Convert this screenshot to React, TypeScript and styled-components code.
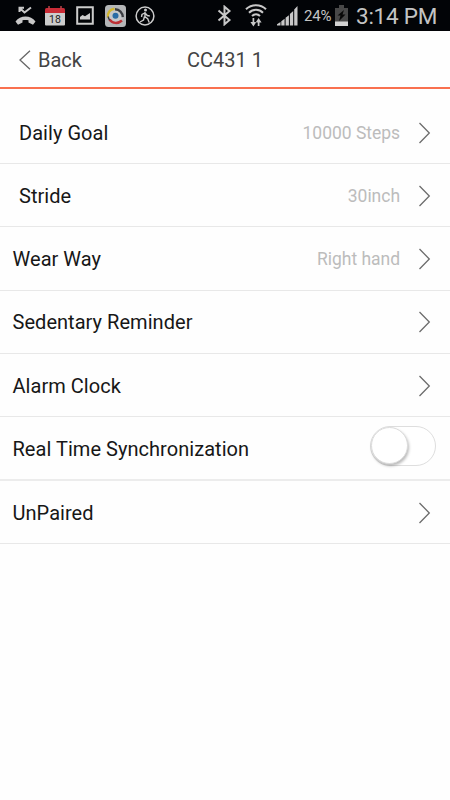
import React from "react";
import styled, { createGlobalStyle } from "styled-components";

const GlobalStyle = createGlobalStyle`
  * { box-sizing: border-box; }
  body { margin: 0; background: #fff; font-family: Roboto, sans-serif; }
`;

const Screen = styled.div`
  width: 450px;
  height: 800px;
  display: flex;
  flex-direction: column;
  background: #fefefe;
  overflow: hidden;
`;

const StatusBar = styled.div`
  height: 31px;
  flex: none;
  display: flex;
  justify-content: space-between;
  background: #020407;
  color: #c4c4c4;
`;

const StatusGroup = styled.div`
  display: flex;
  align-items: center;
  white-space: nowrap;
`;

const StatusIcon = styled.svg<{ $gap?: number }>`
  display: block;
  flex: none;
  margin-left: ${(p) => p.$gap ?? 0}px;
`;

const Percent = styled.span`
  width: 28px;
  margin-left: 6px;
  font-size: 15px;
  line-height: 31px;
  padding-top: 1px;
  letter-spacing: -0.2px;
`;

const Clock = styled.span`
  width: 82px;
  margin: 1px 12px 0 8px;
  font-size: 22.5px;
  letter-spacing: -0.25px;
  line-height: 31px;
`;

const Header = styled.header`
  height: 58px;
  flex: none;
  display: grid;
  grid-template-columns: 150px 150px 150px;
  align-items: center;
  border-bottom: 2px solid #f9704f;
  color: #444;
  font-size: 20px;
`;

const BackButton = styled.button`
  display: flex;
  align-items: center;
  gap: 7px;
  padding: 1px 0 0 19px;
  border: 0;
  background: none;
  color: inherit;
  font: inherit;
  letter-spacing: -0.05px;
`;

const Title = styled.h1`
  margin: 1px 0 0;
  font: inherit;
  text-align: center;
`;

const List = styled.main`
  padding-top: 12px;
`;

const Row = styled.div<{ $height: number; $indent: number; $top: number; $heavy?: boolean }>`
  height: ${(p) => p.$height}px;
  display: flex;
  align-items: center;
  padding: ${(p) => p.$top}px 19px 0 ${(p) => p.$indent}px;
  border-bottom: ${(p) => (p.$heavy ? "2px solid #ececec" : "1px solid #e8e8e8")};
`;

const Label = styled.span`
  flex: 1;
  color: #171717;
  font-size: 20px;
  letter-spacing: 0.04px;
`;

const Value = styled.span`
  margin-right: 18px;
  color: #bcbcbc;
  font-size: 17.5px;
  letter-spacing: -0.03px;
`;

const ChevronIcon = styled.svg`
  display: block;
  flex: none;
`;

const Toggle = styled.button`
  width: 66px;
  height: 40px;
  margin: -7px -5px 0 0;
  padding: 0;
  border: 1px solid #dedede;
  border-radius: 20px;
  background: #fff;
`;

const Knob = styled.span`
  display: block;
  width: 37px;
  height: 37px;
  border-radius: 50%;
  border: 1px solid #dcdcdc;
  background: #fff;
  box-shadow: 1px 2px 3px rgba(0, 0, 0, 0.28);
`;

const Chevron = () => (
  <ChevronIcon width="13" height="22" viewBox="0 0 13 22" fill="none" stroke="#6c6c6c" strokeWidth="1.3">
    <path d="M1.5 1 11.3 11 1.5 21" />
  </ChevronIcon>
);

type Item = {
  label: string;
  value?: string;
  height: number;
  indent: number;
  top: number;
  toggle?: boolean;
};

const items: Item[] = [
  { label: "Daily Goal", value: "10000 Steps", height: 63, indent: 19, top: 2 },
  { label: "Stride", value: "30inch", height: 63, indent: 19, top: 2 },
  { label: "Wear Way", value: "Right hand", height: 64, indent: 12.5, top: 0 },
  { label: "Sedentary Reminder", height: 63, indent: 12.5, top: 0 },
  { label: "Alarm Clock", height: 63, indent: 12.5, top: 1 },
  { label: "Real Time Synchronization", height: 64, indent: 12.5, top: 2, toggle: true },
  { label: "UnPaired", height: 63, indent: 12.5, top: 1 },
];

const MissedCall = () => (
  <StatusIcon $gap={15} width="21" height="20" viewBox="0 0 21 20">
    <path d="M.5 15.500C3 12 6.500 10.500 10.500 10.500s7.500 1.500 10 5L18 18.800l-4.500-2.300v-2.200c-2-.5-4-.5-6 0v2.200L3 18.800z" fill="#c8c8c8" />
    <path d="M4.500 6V1.800h4.500M5 2.300l4.500 4.200L16 1.500" fill="none" stroke="#c8c8c8" strokeWidth="2" />
  </StatusIcon>
);

const CalendarDay = () => (
  <StatusIcon $gap={9} width="20" height="20" viewBox="0 0 20 20">
    <path d="M0 3.500Q0 2 1.500 2h17Q20 2 20 3.500V8H0z" fill="#c92b36" />
    <path d="M0 7h20v11.500q0 1-1 1H1q-1 0-1-1z" fill="#ccc" />
    <path d="M4 0v3.500M16 0v3.500" stroke="#b8434a" strokeWidth="1.500" />
    <text x="10" y="17" textAnchor="middle" fontSize="10.500" fontFamily="Roboto, sans-serif" fill="#222">18</text>
  </StatusIcon>
);

const Picture = () => (
  <StatusIcon $gap={11} width="18" height="19" viewBox="0 0 18 19">
    <path d="M1.200 1.200h15.600v16.600H1.200z" fill="none" stroke="#ccc" strokeWidth="2" />
    <path d="M4 13.500V11l2.500-2 2.500 1.300L14 7v6.500z" fill="#ccc" />
  </StatusIcon>
);

const SwirlApp = () => (
  <StatusIcon $gap={11} width="21" height="22" viewBox="0 0 21 22">
    <rect width="21" height="22" rx="3.500" fill="#b4b6b8" />
    <circle cx="10.500" cy="11" r="7.500" fill="#c6c8ca" />
    <g fill="none" strokeWidth="2.400">
      <path d="M3 12.500C2.300 7.500 5 4.300 9.500 3.800" stroke="#d3b72f" />
      <path d="M10 4.200c4.500.3 7.500 3.500 7.800 8" stroke="#3a3d42" />
      <path d="M4.500 14.500c3 4.300 8.500 4.500 12.500 1" stroke="#bd3035" />
      <path d="M3.200 11.500c.2 1.500.6 2.500 1.500 3.500" stroke="#3a3d42" strokeWidth="1.500" />
    </g>
    <circle cx="10.500" cy="10.800" r="3" fill="#2a6ca5" />
  </StatusIcon>
);

const Walker = () => (
  <StatusIcon $gap={9} width="20" height="20" viewBox="0 0 20 20">
    <circle cx="10" cy="10" r="8.900" fill="none" stroke="#ccc" strokeWidth="1.500" />
    <circle cx="10.500" cy="4" r="1.500" fill="#ccc" />
    <path d="M10 6v4.800l2.700 2 1.500 3.700M9.500 10.500 8.500 14 5 16M9.700 7 7 8.500 6.500 11M10.500 7.500l1.800 2 2.500.5" fill="none" stroke="#ccc" strokeWidth="1.400" />
  </StatusIcon>
);

const Bluetooth = () => (
  <StatusIcon width="15" height="21" viewBox="0 0 15 21">
    <path d="m1.500 5.500 11 9.500-5 4.300V1.700l5 4.300-11 9.500" fill="none" stroke="#c8c8c8" strokeWidth="2" />
  </StatusIcon>
);

const Wifi = () => (
  <StatusIcon $gap={13} width="22" height="23" viewBox="0 0 22 23">
    <g fill="none" stroke="#c8c8c8" strokeWidth="2">
      <path d="M1 5.200C6.500-.2 15.500-.2 21 5.200" />
      <path d="M4 8.700c4-3.900 10-3.900 14 0" />
      <path d="M7 12c2.300-2.200 5.700-2.200 8 0" />
      <path d="M8.400 14v6M13.600 22v-6" strokeWidth="1.700" />
    </g>
    <path d="M5.400 18h6l-3 4.500zM10.600 18.500h6l-3-4.500z" fill="#c8c8c8" />
  </StatusIcon>
);

const Signal = () => (
  <StatusIcon $gap={10} width="21" height="21" viewBox="0 0 21 21">
    <path d="M0 20.500v-1.300L3.500 17v3.500zM4.300 20.500v-4.300l3.300-2.500v6.800zM8.600 20.500v-7.700l3.300-2.600v10.300zM12.900 20.500V9l3.300-3v14.500zM17.200 20.500V4.500L20.500 1v19.500z" fill="#c8c8c8" />
  </StatusIcon>
);

const Battery = () => (
  <StatusIcon $gap={3} width="13" height="21" viewBox="0 0 13 21">
    <path d="M4 0h5v3h4v18H0V3h4z" fill="#484848" />
    <path d="M0 16.500h13V21H0z" fill="#d2d2d2" />
    <path d="M9 5 2.500 10.500h3L4 16l6.500-6.500h-3z" fill="#080808" />
  </StatusIcon>
);

export default function App() {
  return (
    <Screen>
      <GlobalStyle />
      <StatusBar>
        <StatusGroup>
          <MissedCall />
          <CalendarDay />
          <Picture />
          <SwirlApp />
          <Walker />
        </StatusGroup>
        <StatusGroup>
          <Bluetooth />
          <Wifi />
          <Signal />
          <Percent>24%</Percent>
          <Battery />
          <Clock>3:14 PM</Clock>
        </StatusGroup>
      </StatusBar>
      <Header>
        <BackButton>
          <ChevronIcon width="12" height="20" viewBox="0 0 12 20" fill="none" stroke="#666" strokeWidth="1.3">
            <path d="M11 .8 1 10l10 9.200" />
          </ChevronIcon>
          Back
        </BackButton>
        <Title>CC431 1</Title>
      </Header>
      <List>
        {items.map((item) => (
          <Row
            key={item.label}
            $height={item.height}
            $indent={item.indent}
            $top={item.top}
            $heavy={item.toggle}
          >
            <Label>{item.label}</Label>
            {item.value && <Value>{item.value}</Value>}
            {item.toggle ? (
              <Toggle role="switch" aria-checked={false} aria-label={item.label}>
                <Knob />
              </Toggle>
            ) : (
              <Chevron />
            )}
          </Row>
        ))}
      </List>
    </Screen>
  );
}
